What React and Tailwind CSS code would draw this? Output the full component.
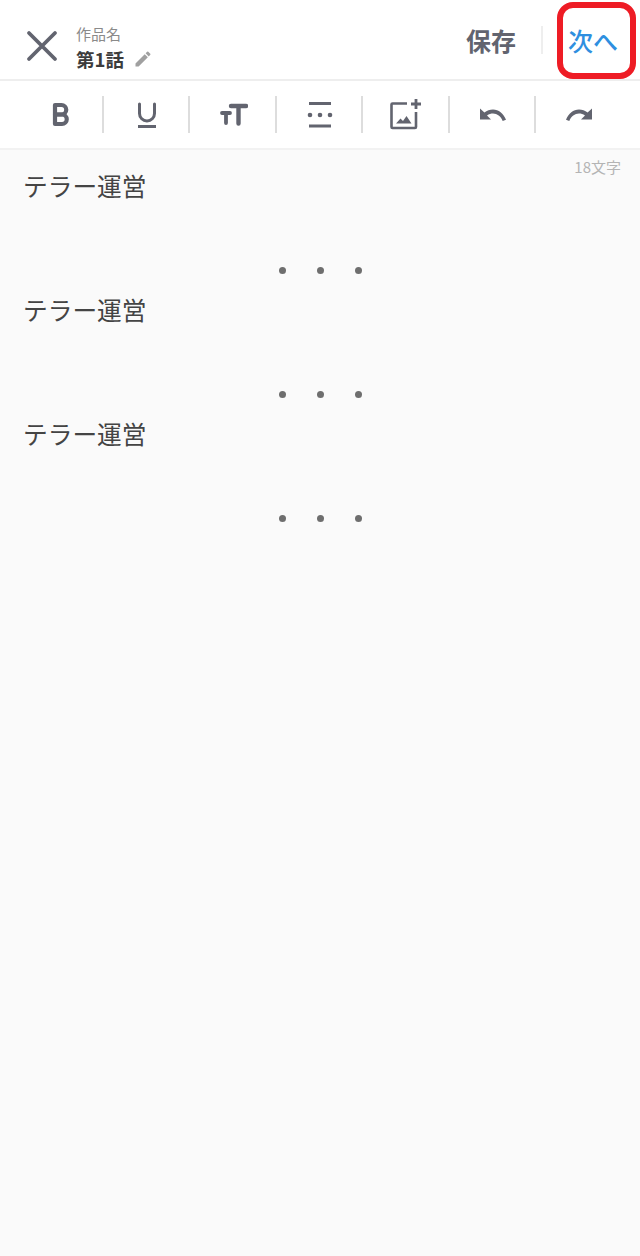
import React from 'react';

const jp = 'font-["Noto_Sans_CJK_JP","Noto_Sans",sans-serif]';

const BoldIcon = () => (
    <svg width="28" height="28" viewBox="0 0 28 28" fill="none" stroke="#62646f" strokeWidth="4.200" strokeLinejoin="round">
        <path d="M8 4h6.500a4.750 4.750 0 0 1 0 9.500H8Z" />
        <path d="M8 13.500h7a4.750 4.750 0 0 1 0 9.500H8Z" />
    </svg>
);

const UnderlineIcon = () => (
    <svg width="28" height="28" viewBox="0 0 28 28" fill="none" stroke="#62646f" strokeLinecap="round">
        <path d="M6.500 3v9.500a7.500 7.500 0 0 0 15 0V3" strokeWidth="3" />
        <path d="M5 25.500h18" strokeWidth="3" strokeLinecap="butt" />
    </svg>
);

const SizeIcon = () => (
    <svg width="28" height="28" viewBox="0 0 28 28" fill="none" stroke="#62646f" strokeLinecap="round">
        <path d="M11 5h15M18.500 5v17.500" strokeWidth="4.400" />
        <path d="M2 12h8M6 12v10" strokeWidth="3.800" />
    </svg>
);

const BreakIcon = () => (
    <svg width="28" height="28" viewBox="0 0 28 28" fill="#62646f">
        <rect x="3" y="1" width="22" height="3" />
        <rect x="3" y="23.500" width="22" height="3" />
        <circle cx="4" cy="14" r="2.300" />
        <circle cx="14" cy="14" r="2.300" />
        <circle cx="24" cy="14" r="2.300" />
    </svg>
);

const ImageIcon = () => (
    <svg width="32" height="32" viewBox="0 0 32 32" fill="none" stroke="#62646f">
        <path d="M17 4.500H2.500a1 1 0 0 0-1 1V28a1 1 0 0 0 1 1H25a1 1 0 0 0 1-1V13" strokeWidth="2.600" />
        <path d="M26 0v10M21 5h10" strokeWidth="2.800" />
        <path d="M6 24.500l4.500-5 2.500 2.500 3.500-5 5 7.500Z" fill="#62646f" stroke="none" />
    </svg>
);

const UndoIcon = ({ flip }) => (
    <svg width="28" height="16" viewBox="0 0 28 16" fill="#62646f" className={flip ? '-scale-x-100' : ''}>
        <path d="M1 1.500v11h11L8 8.600C10 7.200 12 6.600 14 6.600c4.200 0 7.800 2.800 9.700 7.400l3.300-1.200C24.500 6.600 19.600 2.600 14 2.600c-3.200 0-6 1-8.600 2.900Z" />
    </svg>
);

const tools = [
    <BoldIcon key="b" />,
    <UnderlineIcon key="u" />,
    <SizeIcon key="s" />,
    <BreakIcon key="h" />,
    <ImageIcon key="i" />,
    <UndoIcon key="un" />,
    <UndoIcon key="re" flip />,
];

const blocks = [0, 1, 2];

export default function App() {
    return (
        <div className={`relative w-[640px] h-[1256px] flex flex-col bg-[#fafafa] overflow-hidden ${jp}`}>
            <header className="h-[81px] flex-none flex items-center bg-white border-b-2 border-[#eeeeee]">
                <div className="w-[76px] flex-none flex justify-center pl-[8px] pt-[13px]">
                    <svg width="32" height="32" viewBox="0 0 32 32" fill="none" stroke="#62646f" strokeWidth="3.800" strokeLinecap="round">
                        <path d="M3 3l26 26M29 3L3 29" />
                    </svg>
                </div>
                <div className="flex-1 flex flex-col pt-[14px]">
                    <div className="text-[15px] leading-[20px] text-[#8a8a8a]">作品名</div>
                    <div className="flex items-center gap-[9px] mt-[4px]">
                        <span className="text-[18.500px] leading-[22px] font-bold text-[#3c3c3c]">第1話</span>
                        <svg width="20" height="20" viewBox="0 0 24 24" fill="#a0a0a0">
                            <path d="M3 17.250V21h3.750L17.810 9.940l-3.750-3.750L3 17.250zM20.710 7.040a1 1 0 0 0 0-1.410l-2.340-2.340a1 1 0 0 0-1.410 0l-1.830 1.830 3.750 3.750 1.830-1.830z" />
                        </svg>
                    </div>
                </div>
                <span className="text-[25px] leading-[32px] font-semibold text-[#62646f]">保存</span>
                <div className="w-[2px] h-[28px] ml-[25px] bg-[#eeeeee]"></div>
                <span className="w-[97px] pl-[25px] text-[25px] leading-[32px] font-medium text-[#2e8fe0]">次へ</span>
            </header>

            <div className="h-[69px] flex-none flex items-center px-[17.500px] bg-white border-b-2 border-[#f2f2f2]">
                {tools.map((icon, i) => (
                    <div key={i} className={`flex-1 h-[37px] pl-[2px] flex items-center justify-center border-r-2 ${i < 6 ? 'border-[#dddddd]' : 'border-transparent'}`}>
                        {icon}
                    </div>
                ))}
            </div>

            <main className="relative flex-1 px-[24px] pt-[17px]">
                <div className="absolute top-[8px] right-[19px] text-[15px] leading-[18px] text-[#b4b4b4]">18文字</div>
                {blocks.map((b) => (
                    <div key={b} className="h-[124px]">
                        <div className="text-[24.700px] leading-[36px] -ml-[1px] text-[#444444]">テラー運営</div>
                        <div className="flex justify-center gap-[31px] pt-[64px]">
                            <span className="w-[7px] h-[7px] rounded-full bg-[#6e6e6e]"></span>
                            <span className="w-[7px] h-[7px] rounded-full bg-[#6e6e6e]"></span>
                            <span className="w-[7px] h-[7px] rounded-full bg-[#6e6e6e]"></span>
                        </div>
                    </div>
                ))}
            </main>

            <div className="absolute left-[557px] top-[2px] w-[79px] h-[77px] border-[6px] border-[#ee1c25] rounded-[16px]"></div>
        </div>
    );
}
